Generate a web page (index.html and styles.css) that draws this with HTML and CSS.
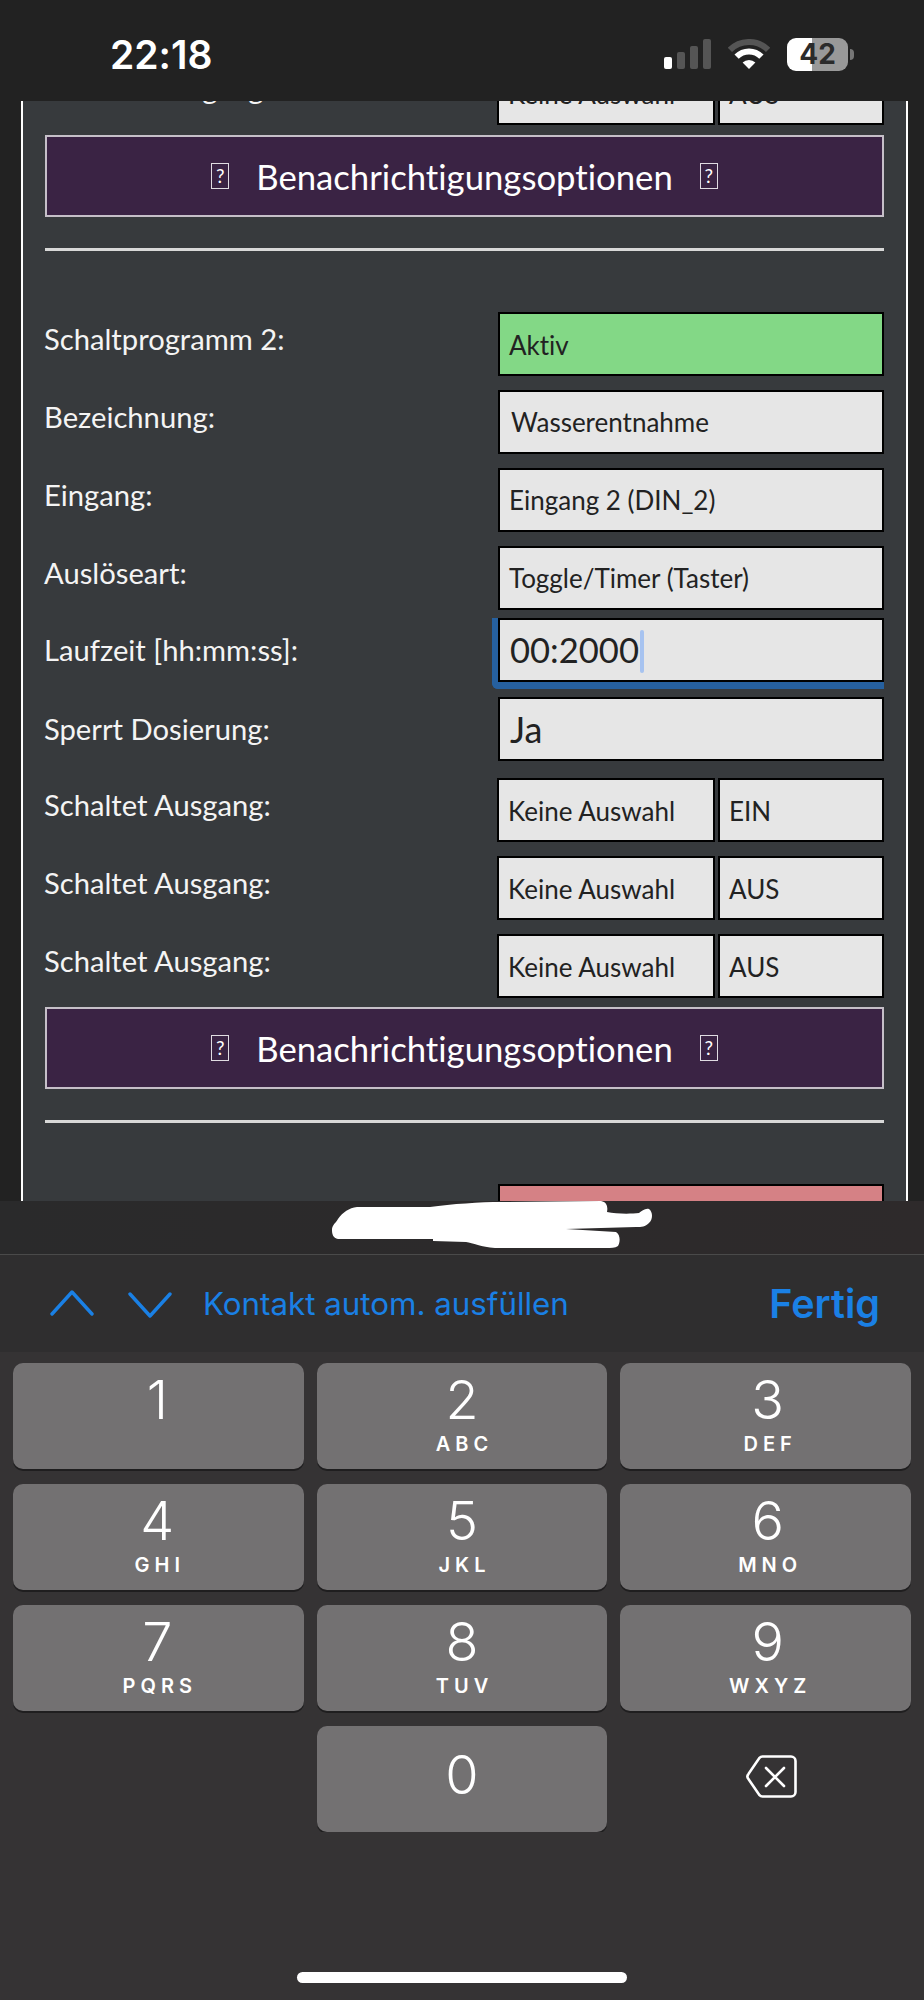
FILE: index.html
```html
<!DOCTYPE html>
<html lang="de">
<head>
    <meta charset="UTF-8">
    <meta name="viewport" content="width=device-width, initial-scale=1.0">
    <title>Schaltprogramme</title>
    <link rel="stylesheet" href="styles.css">
</head>
<body>
    <div class="screen">
        <div class="status-bar">
            <div class="time">22:18</div>
            <div class="status-icons">
                <div class="signal">
                    <span class="bar bar-1 on"></span>
                    <span class="bar bar-2"></span>
                    <span class="bar bar-3"></span>
                    <span class="bar bar-4"></span>
                </div>
                <svg class="wifi" viewBox="0 0 42 30" width="42" height="30">
                    <path d="M1.9 10.9A27 27 0 0 1 40.1 10.9" fill="none" stroke="#555" stroke-width="6"/>
                    <path d="M8.6 17.6A17.5 17.5 0 0 1 33.4 17.6" fill="none" stroke="#fff" stroke-width="6"/>
                    <path d="M21 30L14.6 23.6A9 9 0 0 1 27.4 23.6Z" fill="#fff"/>
                </svg>
                <div class="battery">42</div>
                <div class="battery-nub"></div>
            </div>
        </div>

        <div class="webview">
            <div class="panel">
                <div class="row first">
                    <div class="label">Schaltet Ausgang:</div>
                    <div class="field-pair">
                        <div class="field wide">Keine Auswahl</div>
                        <div class="field narrow">AUS</div>
                    </div>
                </div>
                <div class="notify-btn">
                    <span class="tofu">?</span>
                    <span>Benachrichtigungsoptionen</span>
                    <span class="tofu">?</span>
                </div>
                <div class="divider"></div>

                <div class="row">
                    <div class="label">Schaltprogramm 2:</div>
                    <div class="field green">Aktiv</div>
                </div>
                <div class="row">
                    <div class="label">Bezeichnung:</div>
                    <div class="field name">Wasserentnahme</div>
                </div>
                <div class="row">
                    <div class="label">Eingang:</div>
                    <div class="field">Eingang 2 (DIN_2)</div>
                </div>
                <div class="row before-focus">
                    <div class="label">Auslöseart:</div>
                    <div class="field">Toggle/Timer (Taster)</div>
                </div>
                <div class="row row-focus">
                    <div class="label">Laufzeit [hh:mm:ss]:</div>
                    <div class="focus-ring">
                        <div class="field big clock">00:2000<span class="caret"></span></div>
                    </div>
                </div>
                <div class="row row-ja">
                    <div class="label">Sperrt Dosierung:</div>
                    <div class="field big">Ja</div>
                </div>
                <div class="row">
                    <div class="label">Schaltet Ausgang:</div>
                    <div class="field-pair">
                        <div class="field wide">Keine Auswahl</div>
                        <div class="field narrow">EIN</div>
                    </div>
                </div>
                <div class="row">
                    <div class="label">Schaltet Ausgang:</div>
                    <div class="field-pair">
                        <div class="field wide">Keine Auswahl</div>
                        <div class="field narrow">AUS</div>
                    </div>
                </div>
                <div class="row last">
                    <div class="label">Schaltet Ausgang:</div>
                    <div class="field-pair">
                        <div class="field wide">Keine Auswahl</div>
                        <div class="field narrow">AUS</div>
                    </div>
                </div>
                <div class="notify-btn">
                    <span class="tofu">?</span>
                    <span>Benachrichtigungsoptionen</span>
                    <span class="tofu">?</span>
                </div>
                <div class="divider"></div>

                <div class="row">
                    <div class="label"></div>
                    <div class="field red"></div>
                </div>
            </div>
        </div>

        <div class="address-bar">
            <svg class="scribble" viewBox="0 0 330 48" width="330" height="48">
                <path fill="#fff" d="M1 29C1 24 4 23 7 18C12 11 18 7 26 6L99 6C120 3 150 1 170 1L270 0C276 1 277 6 276 11C285 13 300 13 308 12C311 10 314 7 318 8C322 11 322 18 318 22C314 26 311 26 305 26L235 28L285 31C290 34 289 42 287 45C284 47 280 47 275 47L164 47C150 46 142 42 135 41L102 40L102 38L7 38C2 37 1 33 1 29Z"/>
            </svg>
        </div>

        <div class="toolbar">
            <svg class="chevron" viewBox="0 0 44 26" width="44" height="26">
                <path d="M2 24L22 2L42 24" fill="none" stroke="#1a80e5" stroke-width="3.4" stroke-linecap="round" stroke-linejoin="round"/>
            </svg>
            <svg class="chevron down" viewBox="0 0 44 26" width="44" height="26">
                <path d="M2 2L22 24L42 2" fill="none" stroke="#1a80e5" stroke-width="3.4" stroke-linecap="round" stroke-linejoin="round"/>
            </svg>
            <div class="autofill">Kontakt autom. ausfüllen</div>
            <div class="done">Fertig</div>
        </div>

        <div class="keyboard">
            <div class="key"><span class="digit">1</span></div>
            <div class="key"><span class="digit">2</span><span class="letters">ABC</span></div>
            <div class="key"><span class="digit">3</span><span class="letters">DEF</span></div>
            <div class="key"><span class="digit">4</span><span class="letters">GHI</span></div>
            <div class="key"><span class="digit">5</span><span class="letters">JKL</span></div>
            <div class="key"><span class="digit">6</span><span class="letters">MNO</span></div>
            <div class="key"><span class="digit">7</span><span class="letters">PQRS</span></div>
            <div class="key"><span class="digit">8</span><span class="letters">TUV</span></div>
            <div class="key"><span class="digit">9</span><span class="letters">WXYZ</span></div>
            <div class="key-empty"></div>
            <div class="key key-zero"><span class="digit">0</span></div>
            <div class="key-delete">
                <svg viewBox="0 0 51 43" width="51" height="43">
                    <path d="M16.5 1.5H45a4.5 4.5 0 0 1 4.500 4.500V37a4.500 4.500 0 0 1-4.500 4.500H16.500a4 4 0 0 1-3-1.300L2.600 24.200a4 4 0 0 1 0-5.400L13.500 2.800a4 4 0 0 1 3-1.300Z" fill="none" stroke="#fff" stroke-width="2.600"/>
                    <path d="M20 13L38 31M38 13L20 31" fill="none" stroke="#fff" stroke-width="2.600" stroke-linecap="round"/>
                </svg>
            </div>
        </div>
        <div class="home-area">
            <div class="home-indicator"></div>
        </div>
    </div>
</body>
</html>
```

FILE: styles.css
```css
* {
    box-sizing: border-box;
}
html, body {
    margin: 0;
    padding: 0;
    background: #353334;
}
.screen {
    width: 924px;
    height: 2000px;
    display: flex;
    flex-direction: column;
    overflow: hidden;
    font-family: Lato, sans-serif;
    font-variant-ligatures: none;
}

/* status bar */
.status-bar {
    height: 101px;
    flex: none;
    background: #222222;
    display: flex;
    justify-content: space-between;
    padding: 36px 70px 0 110px;
}
.time {
    font-family: Inter, sans-serif;
    font-weight: 600;
    font-size: 39px;
    line-height: 30px;
    padding-top: 4px;
    color: #fff;
}
.status-icons {
    display: flex;
    align-items: flex-start;
}
.signal {
    display: flex;
    align-items: flex-end;
    gap: 5px;
    height: 30px;
    margin-top: 3px;
}
.bar {
    width: 8px;
    background: #555;
    border-radius: 2px;
}
.bar.on { background: #fff; }
.bar-1 { height: 12px; }
.bar-2 { height: 17px; }
.bar-3 { height: 23px; }
.bar-4 { height: 30px; }
.wifi {
    margin: 3px 0 0 17px;
}
.battery {
    width: 61px;
    height: 33px;
    margin: 2px 0 0 17px;
    border-radius: 9px;
    background: linear-gradient(to right, #fff 41%, #999 41%);
    color: #2b2b2b;
    font-family: Inter, sans-serif;
    font-weight: 700;
    font-size: 28px;
    line-height: 33px;
    text-align: center;
}
.battery-nub {
    width: 4px;
    height: 11px;
    margin: 13px 0 0 2px;
    background: #777;
    border-radius: 0 4px 4px 0;
}

/* web page behind the keyboard */
.webview {
    height: 1100px;
    flex: none;
    background: #222222;
    overflow: hidden;
}
.panel {
    width: 887px;
    margin: -40px 0 0 21px;
    padding: 0 22px;
    background: #373a3d;
    border-left: 2px solid #fff;
    border-right: 2px solid #fff;
}
.row {
    display: flex;
    justify-content: space-between;
    margin-bottom: 14px;
}
.row.first { margin-bottom: 10px; }
.row.before-focus { margin-bottom: 8px; }
.row.row-focus { margin-bottom: 8px; }
.row.row-ja { margin-bottom: 17px; }
.row.last { margin-bottom: 9px; }
.label {
    color: #f4f4f4;
    font-size: 29.2px;
    line-height: 34px;
    padding-top: 10px;
    text-indent: -1px;
}
.row-focus .label,
.row-ja .label {
    padding-top: 15px;
}
.field {
    width: 386px;
    height: 64px;
    border: 2px solid #000;
    background: #e6e6e6;
    color: #222;
    font-size: 26px;
    line-height: 60px;
    padding-left: 9px;
    white-space: nowrap;
}
.field.green {
    background: #83d886;
    line-height: 62px;
}
.field.red { background: #d58185; }
.field.name { padding-left: 11px; }
.field.big {
    font-size: 36px;
    padding-left: 10px;
}
.field.clock {
    font-size: 34.6px;
}
.field-pair {
    display: flex;
    gap: 3px;
}
.field.wide {
    width: 218px;
    line-height: 62px;
}
.field.narrow {
    width: 166px;
    line-height: 62px;
}
.focus-ring {
    border-left: 6px solid #26609f;
    border-bottom: 7px solid #26609f;
    border-bottom-left-radius: 6px;
}
.caret {
    display: inline-block;
    width: 4px;
    height: 43px;
    margin-left: 1px;
    vertical-align: -10px;
    background: #a7c3f0;
    border-radius: 2px;
}
.notify-btn {
    height: 82px;
    border: 2px solid #c5bfc8;
    background: #3a2344;
    color: #fff;
    font-size: 34.7px;
    display: flex;
    justify-content: center;
    align-items: center;
    gap: 27px;
}
.tofu {
    width: 18px;
    height: 26px;
    border: 1px solid #e0dce2;
    font-size: 19px;
    line-height: 24px;
    text-align: center;
}
.divider {
    height: 3px;
    margin: 31px 0 61px;
    background: #d8d8d8;
}

/* strip above the keyboard */
.address-bar {
    height: 54px;
    flex: none;
    background: linear-gradient(to right, #2a2a2b, #2e2a2b);
    border-bottom: 1px solid #4a4a4a;
    padding-left: 331px;
    display: flex;
}
.scribble {
    display: block;
}
.toolbar {
    height: 97px;
    flex: none;
    background: #2f2e2f;
    display: flex;
    align-items: center;
    padding: 0 44px 0 50px;
}
.chevron {
    margin-top: -2px;
}
.chevron.down {
    margin: 2px 0 0 34px;
}
.autofill {
    margin-left: 31px;
    font-family: Inter, sans-serif;
    font-size: 31.3px;
    color: #1a80e5;
    flex: 1;
}
.done {
    font-family: Inter, sans-serif;
    font-weight: 600;
    font-size: 39.5px;
    color: #1a80e5;
}

/* number pad */
.keyboard {
    flex: none;
    background: #353334;
    padding: 11px 13px 0;
    display: grid;
    grid-template-columns: repeat(3, 1fr);
    grid-auto-rows: 106px;
    gap: 15px 13px;
}
.key {
    background: #737172;
    border-radius: 10px;
    box-shadow: 0 2px 0 #1f1e1f;
    display: flex;
    flex-direction: column;
    align-items: center;
    color: #fff;
    font-family: Inter, sans-serif;
}
.key:nth-child(3n) {
    padding-left: 4px;
}
.key:nth-child(3n+1) {
    padding-right: 2px;
}
.digit {
    font-size: 54px;
    font-weight: 300;
    line-height: 60px;
    margin-top: 7px;
}
.letters {
    font-size: 20px;
    font-weight: 600;
    letter-spacing: 5px;
    line-height: 20px;
    margin-top: 4px;
    padding-left: 5px;
}
.key-zero .digit {
    margin-top: 19px;
}
.key-delete {
    display: flex;
    justify-content: center;
    align-items: center;
    padding: 0 0 5px 12px;
}
.home-area {
    flex: 1;
    background: #353334;
    padding-top: 140px;
}
.home-indicator {
    width: 330px;
    height: 11px;
    margin-left: 297px;
    border-radius: 6px;
    background: #fff;
}
```
